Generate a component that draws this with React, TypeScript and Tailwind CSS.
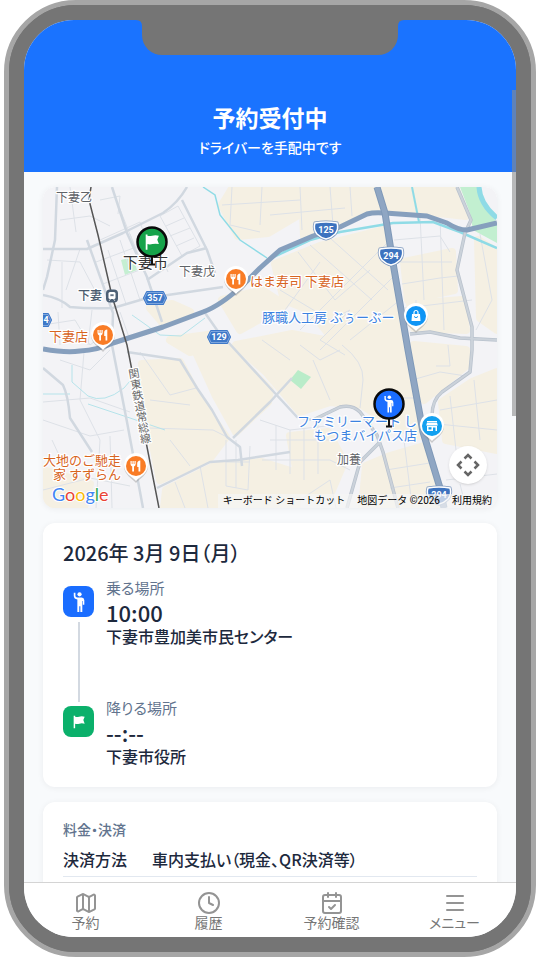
import type { ReactNode } from "react";
import { CalendarCheck, Clock, Map as MapIcon, Menu } from "lucide-react";

const farmland = [
  "M233 187H300V214L268 233L238 236L222 205Z",
  "M302 187H374L378 207L345 219L304 236Z",
  "M385 187H455L466 216L430 212L389 209Z",
  "M275 264L320 246L384 230L392 280L401 330L412 390L420 436L390 424L362 405L330 402L300 412L266 372L236 345L292 334L335 342L310 310L284 300Z",
  "M222 300L262 290L285 305L240 330Z",
  "M142 364L180 362L200 400L226 437L210 458L160 480L150 430Z",
  "M196 352L228 348L270 390L268 402L236 432L216 396Z",
  "M166 490L214 466L262 462L300 474L296 508H164Z",
  "M290 436L328 432L344 462L330 495L300 490Z",
  "M390 456L424 446L438 508H362L366 466Z",
  "M414 345L466 350L466 366L434 392L424 400Z",
  "M442 402L472 382L497 372V450L446 440Z",
  "M404 262L452 252L454 290L408 300Z",
  "M478 240L497 252V330L480 318Z",
  "M410 304L462 300L466 330L414 328Z",
  "M150 308L172 304L190 312L162 322Z",
  "M43 470L90 484L84 508H43Z",
  "M170 340L215 334L222 344L190 352Z",
];

const greys = [
  "M43 249H87L123 233L163 213Q178 203 187 187",
  "M112 187L127 233L147 277L162 322",
  "M182 200L207 250L215 273",
  "M147 280L187 253L207 248",
  "M43 295Q60 298 70 307Q90 309 113 308L147 298L223 287",
  "M57 187L55 240L47 277L43 290",
  "M87 240L113 313L112 345L127 422L143 508",
  "M43 368L63 385Q68 395 70 418L92 452",
  "M127 352L180 360L197 388L212 410L227 437L240 447L242 466",
  "M233 438L270 402L292 378",
  "M203 310L217 330L260 377L297 417L313 420",
  "M157 488L210 462L238 460L290 452",
];

const eastRoads = [
  "M457 187L471 220L465 233L457 270L472 327V350L470 372L442 392Q432 400 432 416",
  "M410 334L430 332L460 338L497 340",
  "M313 420L340 407Q352 404 360 412L377 435L383 452L398 508",
  "M380 442L360 462L347 508",
];

const lanes = [
  "M60 220L90 216L110 226M70 187L76 232M100 240L140 222L150 250M96 262L166 236M103 284L150 266M118 204L140 260M100 200L120 196L118 214",
  "M160 216L178 206L200 246L182 256ZM166 226L184 218M170 236L190 228M176 246L194 238M150 230L168 272M140 236L160 270",
  "M47 260L80 262L100 300M62 262V308M80 249L66 290M120 240L140 300M130 234L156 300M108 250L126 304",
  "M43 325L75 320L90 345L110 330M58 312L60 345M92 310L88 345M120 312L130 340",
  "M43 402L90 398L130 412M60 360L90 370L110 350M84 352L80 400L100 440M43 420L90 436L124 430M52 440L66 470M100 440L96 508M110 436L112 508M43 490L90 478L130 486",
  "M140 352L170 395L196 388M150 400L190 405M148 428L213 430L227 437M170 440L190 466M175 482L185 508M200 466L208 508M226 440V486L248 490L250 446M226 462H250M236 440V488",
  "M222 205L300 200M232 187L230 225L260 232M262 187L260 225M300 187L302 230M330 187L333 225M350 187L352 216M270 215L345 208",
  "M280 290L330 320L350 310L320 340L345 355M298 252L335 300L370 270M310 245L372 300M330 238L388 290M285 310L320 262M300 330L390 240M320 350L395 275M350 340L400 300",
  "M342 345Q364 362 363 380L360 408M300 345L320 360L340 350M290 360L262 340M313 360L330 400M260 420L290 430L326 426M270 440H330M276 425V470M290 430V474M304 428V480M318 425V474M262 460H330L350 470",
  "M394 240L440 236L450 252M400 262H452M420 215L424 300M440 218L444 330M402 284L440 278L458 276M405 308L472 300M416 300V330M480 234L492 300L476 330M448 345L450 366H436",
  "M412 380L440 372L466 376M390 398H418M440 410L497 400M438 424L497 430M450 396L456 450M474 380L480 440M386 470L436 462M390 488L430 482M404 440L412 506M446 480L497 474M460 484L466 508M300 500L330 480L336 508",
];

function Place({ x, y, color, children }: { x: number; y: number; color: string; children: ReactNode }) {
  return (
    <g transform={`translate(${x} ${y})`}>
      <path d="M0 16C-3 12-12 8-12-1A12 12 0 1 1 12-1C12 8 3 12 0 16Z" fill="#7a7a7a" opacity=".35" transform="translate(0 1)" />
      <path d="M0 15C-3 11-12 8-12-1A12 12 0 1 1 12-1C12 8 3 11 0 15Z" fill="#fff" />
      <circle r="10" fill={color} />
      {children}
    </g>
  );
}

const Cutlery = () => (
  <path d="M-5.500-5V-2Q-5.500 0-3.800 .4V5.500H-2V.4Q-.3 0-.3-2V-5H-1.500V-2H-2.300V-5H-3.500V-2H-4.300V-5ZM1.200-2.500Q1.200-5 4.300-5.400V5.500H2.500V1H1.200Z" fill="#fff" />
);

function Shield({ x, y, children }: { x: number; y: number; children: string }) {
  return (
    <g transform={`translate(${x} ${y})`}>
      <path d="M-11-7Q0-9 11-7Q13-1 9 4Q5 8 0 9Q-5 8-9 4Q-13-1-11-7Z" fill="#3d73bf" stroke="#7d97bd" strokeWidth="3" />
      <path d="M-11-7Q0-9 11-7Q13-1 9 4Q5 8 0 9Q-5 8-9 4Q-13-1-11-7Z" fill="#3d73bf" stroke="#fff" strokeWidth="1.500" />
      <text y="3" textAnchor="middle" fill="#fff" fontSize="9" fontWeight="700">{children}</text>
    </g>
  );
}

function Hex({ x, y, shift = 0, children }: { x: number; y: number; shift?: number; children: string }) {
  return (
    <g transform={`translate(${x} ${y})`}>
      <path d="M-8-6H8L11 0L8 6H-8L-11 0Z" fill="#3d78c8" stroke="#3d78c8" strokeWidth="2" strokeLinejoin="round" />
      <path d="M-8-5.500H8L10.500 0L8 5.500H-8L-10.500 0Z" fill="none" stroke="#a9c4ea" strokeWidth=".6" />
      <text x={shift} y="3" textAnchor="middle" fill="#fff" fontSize="9" fontWeight="700">{children}</text>
    </g>
  );
}

function FlagShape() {
  return <path d="M4 2.500H6.200V4Q9 5 12 4Q16 3 20.500 4L18.500 9L20.500 14.500Q16 13.500 12.500 14.500Q9 15.200 6.200 14.500V21.500H4Z" fill="currentColor" />;
}

function PersonShape() {
  return (
    <g fill="currentColor">
      <circle cx="12.600" cy="3.600" r="2.300" />
      <path d="M6.300 1.800H8.100V5.500Q8.300 7 10 7.200H15Q17.600 7.400 17.800 10V15H16.200V11H15.600V23H13.500V16.500H12.300V23H10.200V9.300Q6.500 8.800 6.300 5.500Z" />
    </g>
  );
}

function Pin({ x, y, color, children }: { x: number; y: number; color: string; children: ReactNode }) {
  return (
    <g transform={`translate(${x} ${y})`}>
      <path d="M0 14V22M-3 22.500H3" stroke="#111" strokeWidth="2" />
      <circle r="14.500" fill={color} stroke="#0a0a0a" strokeWidth="2.500" />
      <g color="#fff">{children}</g>
    </g>
  );
}

function RouteMap() {
  return (
    <svg viewBox="43 187 454 321" preserveAspectRatio="xMidYMid slice" className="block h-full w-full [font-feature-settings:normal]" role="img" aria-label="地図">
      <rect x="43" y="187" width="454" height="321" fill="#f3f3f6" />
      <g fill="#f5f0e3" stroke="#f5f0e3" strokeWidth="8" strokeLinejoin="round">
        {farmland.map((d) => <path key={d} d={d} />)}
      </g>
      <path d="M460 187H478L482 200L497 223V243L473 230L470 213Z" fill="#c2efd0" />
      <path d="M298 370L311 377L301 389L290 380Z" fill="#b9ecc9" />
      <path d="M121 260L133 257L137 270L125 275Z" fill="#c5efd2" />
      <g fill="none" stroke="#dde1e7" strokeWidth="1">
        {lanes.map((d) => <path key={d} d={d} />)}
      </g>
      <g fill="none" stroke="#8fdbe6">
        <path d="M203 187L215 195L220 215L240 240L267 258" strokeWidth="1.500" />
        <path d="M267 260L310 240L340 232L393 223L433 222L460 232L497 248" strokeWidth="2.500" />
        <path d="M479 187Q480 204 497 218" strokeWidth="5" />
        <path d="M412 187L419 222" strokeWidth="2" />
        <path d="M132 315L142 322L160 335L181 336L205 318M72 365V382L88 396Q104 404 124 388L136 374M43 394H70M88 404L130 418L165 430" strokeWidth="1" stroke="#b5e3ea" />
      </g>
      <g fill="none" stroke="#d1d8e0" strokeWidth="2.500" strokeLinejoin="round">
        {greys.map((d) => <path key={d} d={d} />)}
      </g>
      <g fill="none" stroke="#b9c2cd" strokeWidth="3.500" strokeLinejoin="round">
        {eastRoads.map((d) => <path key={d} d={d} />)}
      </g>
      <g fill="none" stroke="#cbd2da" strokeWidth="2" strokeLinejoin="round">
        {eastRoads.map((d) => <path key={d} d={d} />)}
      </g>
      <g fill="none" strokeLinejoin="round">
        <path d="M43 349Q66 353 80 351Q98 350 113 343L163 327L203 312Q220 306 243 285L260 268L280 250L313 236L340 227L367 214Q374 212 385 213L427 216L447 223Q458 230 467 230L497 223" stroke="#869fbd" strokeWidth="5" />
        <path d="M377 187L385 213L393 263L408 350L423 432L440 488L444 508" stroke="#7f99b8" strokeWidth="7" />
        <path d="M377 187L385 213L393 263L408 350L423 432L440 488L444 508" stroke="#8fa6c3" strokeWidth="5" />
      </g>
      <path d="M91 187L89 200L98 235L112 296L127 345L159 508" fill="none" stroke="#555" strokeWidth="1.500" />

      <g transform="translate(112 296)">
        <rect x="-6" y="-6.500" width="12" height="13" rx="4" fill="#4d6075" />
        <rect x="-3.500" y="-4" width="7" height="7" rx="1.500" fill="#fff" />
        <path d="M-2-2H2V.3H-2ZM-3 5L-1.500 3M3 5L1.500 3" fill="#4d6075" stroke="#fff" strokeWidth=".7" />
      </g>

      <g fontFamily="Roboto, 'Liberation Sans', sans-serif">
        <Hex x={155} y={298}>357</Hex>
        <Hex x={219} y={337}>129</Hex>
        <Hex x={40} y={320} shift={6}>4</Hex>
        <Shield x={326} y={230}>125</Shield>
        <Shield x={391} y={256}>294</Shield>
        <Shield x={439} y={495}>294</Shield>
      </g>

      <g fontFamily="'Noto Sans CJK JP', sans-serif" stroke="#fff" strokeWidth="2.500" strokeLinejoin="round" style={{ paintOrder: "stroke" }}>
        <g fill="#5f6368" fontSize="12">
          <text x="56" y="202">下妻乙</text>
          <text x="179" y="276">下妻戊</text>
          <text x="337" y="464">加養</text>
          <text x="78" y="300" fill="#4a5b6e" fontWeight="500">下妻</text>
          <text fontSize="11" fill="#666" style={{ writingMode: "vertical-rl" }} transform="translate(133 368) rotate(-10)">関東鉄道常総線</text>
        </g>
        <text x="123" y="268" fill="#333" fontSize="15">下妻市</text>
        <g fill="#d8651f" fontSize="13">
          <text x="250" y="286">はま寿司 下妻店</text>
          <text x="49" y="341">下妻店</text>
          <text x="121" y="465" textAnchor="end">大地のご馳走</text>
          <text x="121" y="479" textAnchor="end">家 すずらん</text>
        </g>
        <g fill="#3b82e0" fontSize="13">
          <text x="262" y="322">豚職人工房 ぶぅーぶー</text>
          <text x="417" y="426" textAnchor="end">ファミリーマート し</text>
          <text x="417" y="440" textAnchor="end">もつまバイパス店</text>
        </g>
      </g>

      <Place x={236} y={279} color="#f97c26"><Cutlery /></Place>
      <Place x={103} y={335} color="#f97c26"><Cutlery /></Place>
      <Place x={136} y={466} color="#f97c26"><Cutlery /></Place>
      <Place x={416} y={316} color="#0f95f5">
        <path d="M-4-2H4L4.500 5H-4.500Z" fill="#fff" />
        <path d="M-2-2V-3.500A2 2 0 0 1 2-3.500V-2" fill="none" stroke="#fff" strokeWidth="1.200" />
        <path d="M-2 .5Q0 3 2 .5" fill="none" stroke="#0f95f5" strokeWidth="1" />
      </Place>
      <Place x={432} y={426} color="#12a0f0">
        <path d="M-5-5H5V-4H-5ZM-5-3.500H5L5.800-.5H-5.800ZM-5 0H5V5H3.500V1.500H1V5H-5Z" fill="#fff" />
        <path d="M-3.500 1.300H-.5V3.500H-3.500Z" fill="#12a0f0" />
      </Place>

      <Pin x={152} y={242} color="#16a34a"><g transform="translate(-9.500 -9.500) scale(.8)"><FlagShape /></g></Pin>
      <Pin x={389} y={404} color="#1a6dff"><g transform="translate(-9.500 -9.500) scale(.78)"><PersonShape /></g></Pin>

      <text x="52" y="501" fontSize="18" fontFamily="Lato, sans-serif" stroke="#fff" strokeWidth="2" style={{ paintOrder: "stroke" }}>
        <tspan fill="#4285f4">G</tspan><tspan fill="#ea4335">o</tspan><tspan fill="#fbbc05">o</tspan><tspan fill="#4285f4">g</tspan><tspan fill="#34a853">l</tspan><tspan fill="#ea4335">e</tspan>
      </text>
    </svg>
  );
}

function Stop({ label, time, place, tile, icon, last }: { label: string; time: string; place: string; tile: string; icon: ReactNode; last?: boolean }) {
  return (
    <li className="flex gap-3">
      <div className="flex w-[31px] shrink-0 flex-col items-center pt-[10px]">
        <span className={`flex size-[31px] items-center justify-center rounded-lg text-white ${tile}`}>{icon}</span>
        {!last && <span className="mt-[5px] -mb-[6px] w-0.5 grow bg-[#d3d9e1]" />}
      </div>
      <div className={`leading-6 text-slate-800 ${last ? "" : "pb-12"}`}>
        <p className="text-[15px] leading-6 text-slate-500">{label}</p>
        <p className="text-[22px] leading-6 font-medium">{time}</p>
        <p className="text-base leading-6 font-medium">{place}</p>
      </div>
    </li>
  );
}

const tabs = [
  { label: "予約", Icon: MapIcon },
  { label: "履歴", Icon: Clock },
  { label: "予約確認", Icon: CalendarCheck },
  { label: "メニュー", Icon: Menu },
];

const card = "rounded-xl bg-white shadow-[0_1px_6px_rgba(15,23,42,0.06)]";

export default function App() {
  return (
    <div className="h-screen bg-white px-1 pb-px font-['Noto_Sans_CJK_JP',sans-serif] [font-feature-settings:'palt']">
      <div className="h-full rounded-[72px] border-5 border-[#a6a6a6] bg-[#757575]">
        <div className="h-full rounded-[67px] border-15 border-[#757575]">
          <div className="relative flex h-full flex-col overflow-hidden rounded-[50px] bg-slate-50">
            <div className="absolute top-0 left-1/2 h-[35px] w-64 -translate-x-1/2 rounded-b-[20px] bg-[#757575]">
              <svg viewBox="0 0 6 6" className="absolute top-0 -left-1.5 size-1.5"><path d="M0 0H6V6Q6 0 0 0Z" fill="#757575" /></svg>
              <svg viewBox="0 0 6 6" className="absolute top-0 -right-1.5 size-1.5"><path d="M6 0H0V6Q0 0 6 0Z" fill="#757575" /></svg>
            </div>
            <div className="absolute top-[70px] right-0 h-[326px] w-1 bg-[#8c8c8c]/60" />

            <header className="shrink-0 bg-[#1a73ff] pt-[79px] pb-[13px] text-center text-white">
              <h1 className="text-[23px] leading-9 font-bold">予約受付中</h1>
              <p className="text-sm leading-6 font-medium">ドライバーを手配中です</p>
            </header>

            <main className="flex min-h-0 grow flex-col gap-[15px] overflow-hidden px-[19px] pt-[15px]">
              <section className={`relative h-[321px] shrink-0 overflow-hidden ${card}`}>
                <RouteMap />
                <button type="button" aria-label="地図の移動" className="absolute right-[10px] bottom-6 flex size-[38px] items-center justify-center rounded-full bg-white shadow">
                  <svg viewBox="-12 -12 24 24" className="size-6" fill="none" stroke="#666" strokeWidth="2.500">
                    <path d="M-3.500-6.500L0-10L3.500-6.500M-3.500 6.500L0 10L3.500 6.500M-6.500-3.500L-10 0L-6.500 3.500M6.500-3.500L10 0L6.500 3.500" />
                  </svg>
                </button>
                <div className="absolute right-0 bottom-0 flex h-[14px] items-center gap-3 bg-[#f5f5f5]/70 px-[5px] font-[Roboto,'Noto_Sans_CJK_JP',sans-serif] text-[10px] leading-[14px] text-black [font-feature-settings:normal]">
                  <button type="button">キーボード ショートカット</button>
                  <span>地図データ ©2026</span>
                  <a href="#terms">利用規約</a>
                </div>
              </section>

              <section className={`shrink-0 px-5 pt-[15px] pb-[19px] ${card}`}>
                <h2 className="mb-2 text-xl leading-[30px] font-medium text-slate-800">2026年 3月 9日（月）</h2>
                <ul>
                  <Stop label="乗る場所" time="10:00" place="下妻市豊加美市民センター" tile="bg-[#1a6dff]" icon={<svg viewBox="0 0 24 24" className="size-[22px]"><PersonShape /></svg>} />
                  <Stop label="降りる場所" time="--:--" place="下妻市役所" tile="bg-[#0bb06b]" icon={<svg viewBox="0 0 24 24" className="size-4"><FlagShape /></svg>} last />
                </ul>
              </section>

              <section className={`shrink-0 px-5 pt-[15px] pb-5 ${card}`}>
                <h2 className="text-sm leading-6 font-medium text-slate-500">料金・決済</h2>
                <dl className="mt-1 text-base leading-7 font-medium text-slate-800">
                  <div className="flex border-b border-slate-200 pb-[3px]">
                    <dt className="w-[89px]">決済方法</dt>
                    <dd>車内支払い（現金、QR決済等）</dd>
                  </div>
                </dl>
              </section>
            </main>

            <nav className="relative grid shrink-0 grid-cols-4 border-t border-[#d4d4d4] bg-white py-2 text-[#777]">
              {tabs.map(({ label, Icon }) => (
                <button key={label} type="button" className="flex flex-col items-center text-sm">
                  <Icon size={24} strokeWidth={2} className="text-[#949494]" />
                  <span className="leading-[14px]">{label}</span>
                </button>
              ))}
            </nav>
          </div>
        </div>
      </div>
    </div>
  );
}
